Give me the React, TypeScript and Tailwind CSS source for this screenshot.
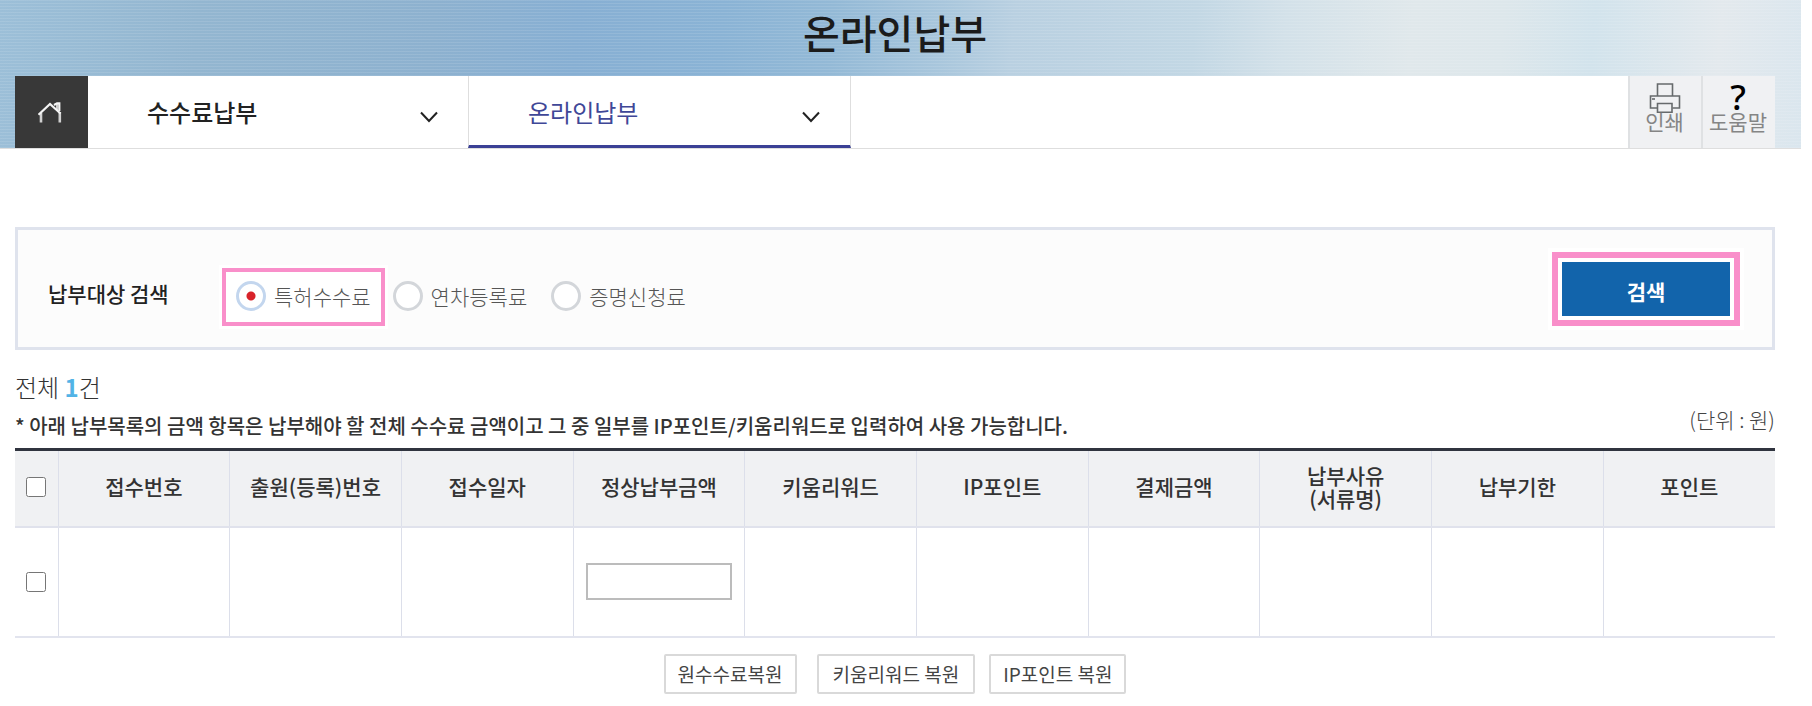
import React, { useState } from "react";

const columns: string[][] = [
  ["접수번호"],
  ["출원(등록)번호"],
  ["접수일자"],
  ["정상납부금액"],
  ["키움리워드"],
  ["IP포인트"],
  ["결제금액"],
  ["납부사유", "(서류명)"],
  ["납부기한"],
  ["포인트"],
];

const amountColumn = 3;

function HomeIcon() {
  return (
    <svg width="24" height="21" viewBox="0 0 24 21" fill="none" stroke="#f4f4f4" strokeWidth="2.2" aria-hidden="true">
      <path d="M3 11V20.5M21.8 10V20.5" stroke="#d0d0d0" strokeWidth="2.6" />
      <path d="M0.5 12.8 12 2 22.5 11.5" />
      <path d="M16 3 19 1.4H21.3V9" />
      <path d="M19 2V8" strokeWidth="1.6" />
    </svg>
  );
}

function Chevron() {
  return (
    <svg width="18" height="12" viewBox="0 0 18 12" fill="none" stroke="#222" strokeWidth="2" aria-hidden="true">
      <path d="M1 1.5 9 10 17 1.5" />
    </svg>
  );
}

function PrinterIcon() {
  return (
    <svg width="32" height="30" viewBox="0 0 32 30" fill="none" stroke="#666a6c" strokeWidth="1.6" aria-hidden="true">
      <path d="M8.5 13V1H23.5V13" />
      <path d="M8.5 25H1.5V13H30.5V25H23.5" />
      <path d="M8.5 20.5H23V29.2H8.5Z" />
      <path d="M3 16H6" />
    </svg>
  );
}

function MenuItem({ label, active = false }: { label: string; active?: boolean }) {
  return (
    <button
      type="button"
      aria-haspopup="menu"
      className={
        active
          ? "flex w-[383px] items-center justify-between border-x border-b-3 border-x-[#dedede] border-b-[#3b4095] bg-white pr-[30px] pl-[59px] pt-[2px] text-2xl text-[#3f4797]"
          : "flex w-[380px] items-center justify-between bg-white pr-[30px] pl-[59px] text-2xl font-medium text-[#222]"
      }
    >
      {label}
      <span className="pt-[10px]">
        <Chevron />
      </span>
    </button>
  );
}

function RadioOption({ label, checked, onSelect }: { label: string; checked: boolean; onSelect: () => void }) {
  return (
    <label className="flex items-center gap-2">
      <input
        type="radio"
        name="feeType"
        checked={checked}
        onChange={onSelect}
        className="size-[30px] appearance-none rounded-full border-3 border-[#d3d6da] bg-white checked:border-[#c3d6ee] checked:bg-[radial-gradient(circle,#d8232a_4px,#ffffff_5px)]"
      />
      {label}
    </label>
  );
}

export default function App() {
  const [feeType, setFeeType] = useState("특허수수료");

  return (
    <div className="min-h-screen bg-white pr-[11px] font-['Noto_Sans_CJK_KR',sans-serif] text-[#333]">
      <header className="border-b border-[#dedede] bg-[repeating-linear-gradient(to_bottom,rgba(255,255,255,0.1)_0px,rgba(255,255,255,0.1)_1px,transparent_1px,transparent_3px),linear-gradient(95deg,#9cbfd8_0%,#93b6d0_11%,#8db1cf_24%,#87afd3_32%,#8ab3d5_40%,#93b9d6_46%,#a8c6dc_52%,#b9d0e1_56%,#c2d7e4_66%,#d3e1e9_71%,#e0e8eb_78%,#dde7eb_83%,#d2e3ec_88%,#e3e9ed_95%,#dae6ee_100%)]">
        <div className="mr-[26px] ml-[15px]">
          <h1 className="flex h-[76px] justify-center pt-3 text-[40px] leading-10 font-medium text-[#1b1b1b]">
            온라인납부
          </h1>
          <nav className="flex h-[72px] bg-white">
            <a href="#home" aria-label="홈" className="flex w-[73px] items-center bg-[#383838] pl-[23px]">
              <HomeIcon />
            </a>
            <MenuItem label="수수료납부" />
            <MenuItem label="온라인납부" active />
            <div className="ml-auto flex text-[21px] leading-[22px] text-[#858585]">
              <button type="button" className="flex w-[73px] flex-col items-center border-l-2 border-[#dfe1e3] bg-[#f0f1f3] pt-[7px] pr-[2px]">
                <PrinterIcon />
                <span className="-mt-[3px]">인쇄</span>
              </button>
              <button type="button" className="flex w-[74px] flex-col items-center border-l-2 border-[#dfe1e3] bg-[#f0f1f3] pt-[8px] pr-[2px]">
                <span className="h-[26px] font-['Noto_Sans'] text-[35px] leading-[26px] font-medium text-black">?</span>
                <span>도움말</span>
              </button>
            </div>
          </nav>
        </div>
      </header>

      <main className="pr-[26px] pl-[15px]">
        <form
          onSubmit={(e) => e.preventDefault()}
          className="mt-[78px] flex h-[123px] items-center border-3 border-[#dfe3ed] bg-[#fcfcfc] pr-8 pl-[30px] text-[21px] leading-[30px]"
        >
          <span className="w-[174px] pt-2 font-medium text-[#222]">납부대상 검색</span>
          <div className="flex grow items-center pt-4 font-light text-[#555]">
            <div className="border-4 border-[#f98fca] bg-white px-[10px] pt-[9px] pb-[11px] outline-3 outline-white">
              <RadioOption label="특허수수료" checked={feeType === "특허수수료"} onSelect={() => setFeeType("특허수수료")} />
            </div>
            <div className="flex gap-6 pb-[2px] pl-2">
              {["연차등록료", "증명신청료"].map((name) => (
                <RadioOption key={name} label={name} checked={feeType === name} onSelect={() => setFeeType(name)} />
              ))}
            </div>
          </div>
          <div className="border-6 border-[#f98fca] bg-white p-1 outline-4 outline-white">
            <button type="submit" className="h-[54px] w-[168px] bg-[#1264ab] pt-1 font-bold text-white">
              검색
            </button>
          </div>
        </form>

        <div className="mt-5 flex items-end justify-between">
          <div>
            <p className="text-2xl leading-[34px] font-light">
              전체 <strong className="font-bold text-[#52b3e6]">1</strong>건
            </p>
            <p className="pt-1 text-xl leading-9 font-medium">
              * 아래 납부목록의 금액 항목은 납부해야 할 전체 수수료 금액이고 그 중 일부를 IP포인트/키움리워드로 입력하여 사용 가능합니다.
            </p>
          </div>
          <p className="pb-[10px] text-[21px] leading-[30px] font-light text-[#444]">(단위 : 원)</p>
        </div>

        <table className="mt-1 w-full table-fixed border-collapse border-t-3 border-b-2 border-t-[#30343f] border-b-[#e2e4ee]">
          <thead>
            <tr className="h-[77px] border-b-2 border-[#e0e2ec] bg-[#f0f1f3] text-[21px] leading-[23px] text-[#333]">
              <th className="w-[43px] pb-[3px]">
                <input type="checkbox" aria-label="전체 선택" className="mx-auto block size-5" />
              </th>
              {columns.map((lines) => (
                <th key={lines[0]} className="border-l border-[#dcdfea] pb-[3px] font-medium">
                  {lines.map((line) => (
                    <span key={line} className="block">
                      {line}
                    </span>
                  ))}
                </th>
              ))}
            </tr>
          </thead>
          <tbody>
            <tr className="h-[110px]">
              <td>
                <input type="checkbox" aria-label="항목 선택" className="mx-auto block size-5" />
              </td>
              {columns.map((lines, i) => (
                <td key={lines[0]} className="border-l border-[#dcdfea] px-3">
                  {i === amountColumn && (
                    <input
                      type="text"
                      aria-label="정상납부금액"
                      className="block h-[37px] w-full border-2 border-[#bcbcbc] bg-white px-2 text-right text-lg"
                    />
                  )}
                </td>
              ))}
            </tr>
          </tbody>
        </table>

        <div className="mt-4 flex justify-center text-[19px] leading-[36px] text-[#444]">
          <button type="button" className="mr-5 rounded-xs border-2 border-[#d9d9d9] bg-white px-3">
            원수수료복원
          </button>
          <button type="button" className="mr-[14px] rounded-xs border-2 border-[#d9d9d9] bg-white px-[14px]">
            키움리워드 복원
          </button>
          <button type="button" className="rounded-xs border-2 border-[#d9d9d9] bg-white px-3">
            IP포인트 복원
          </button>
        </div>
      </main>
    </div>
  );
}
